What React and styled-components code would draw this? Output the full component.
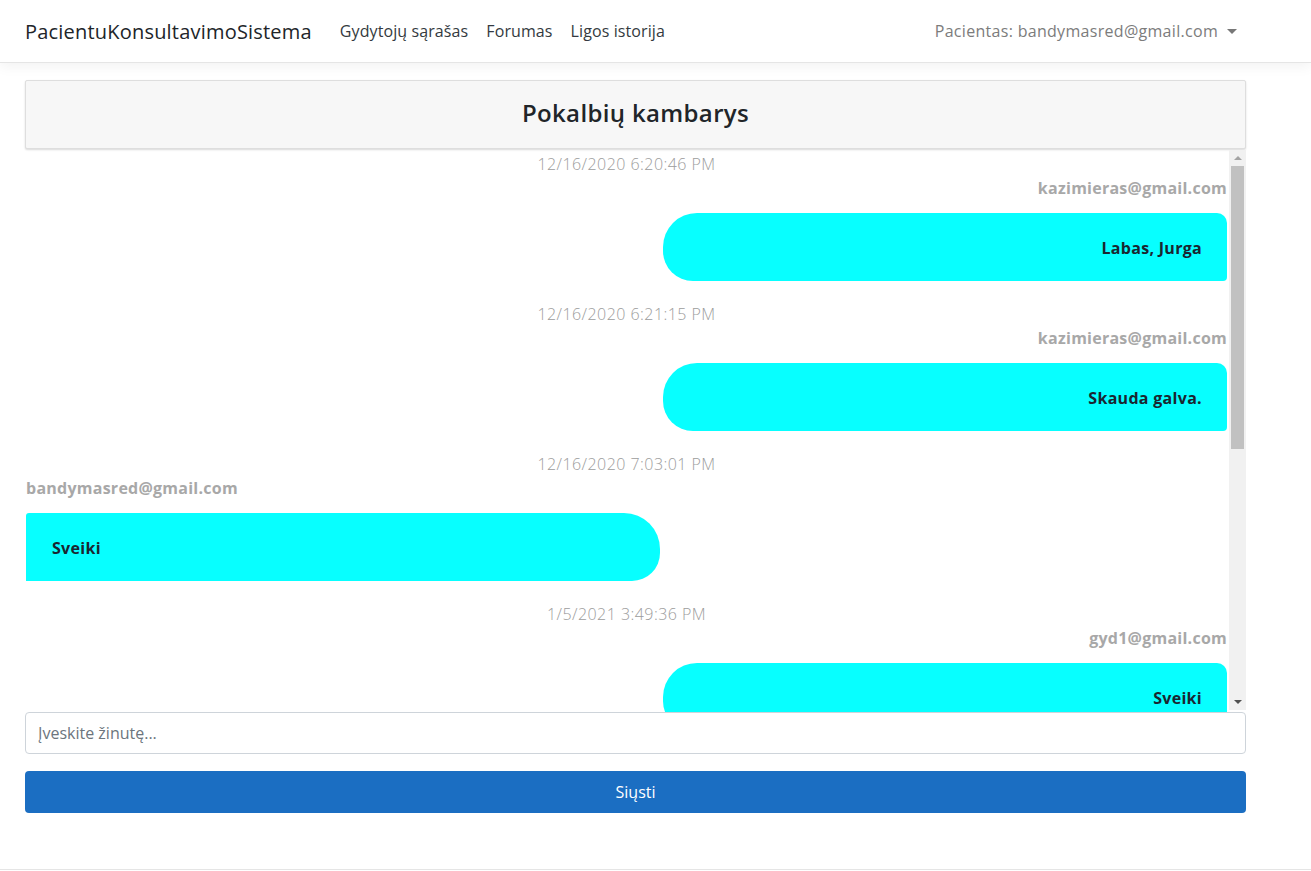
import React from "react";
import styled, { createGlobalStyle } from "styled-components";

const GlobalStyle = createGlobalStyle`
  html, body {
    margin: 0;
    padding: 0;
    height: 871px;
    overflow: hidden;
    background: #fff;
    font-family: "Open Sans", "Noto Sans", sans-serif;
    color: #212529;
  }
  * { box-sizing: border-box; }
`;

const Navbar = styled.nav`
  height: 63px;
  display: flex;
  align-items: center;
  padding: 0 65px 0 25px;
  background: #fff;
  border-bottom: 1px solid #e5e5e5;
  box-shadow: 0 4px 12px rgba(0, 0, 0, 0.05);
`;

const Brand = styled.a`
  font-size: 20px;
  letter-spacing: 0.2px;
  color: #212529;
  margin-right: 28px;
  text-decoration: none;
`;

const NavLinks = styled.div`
  display: flex;
  gap: 18px;
  flex: 1;
`;

const NavLink = styled.a`
  font-size: 16px;
  letter-spacing: 0.1px;
  color: #343a40;
  text-decoration: none;
`;

const UserMenu = styled.div`
  display: flex;
  align-items: center;
  font-size: 16px;
  letter-spacing: 0.3px;
  color: #7c7c7c;
  margin-right: 9px;
`;

const Caret = styled.span`
  display: inline-block;
  margin-left: 9px;
  border-top: 5px solid #777;
  border-left: 5px solid transparent;
  border-right: 5px solid transparent;
`;

const Main = styled.main`
  width: 1221px;
  margin: 17px 0 0 25px;
  display: flex;
  flex-direction: column;
`;

const HeaderCard = styled.div`
  height: 69px;
  padding-bottom: 5px;
  background: #f7f7f7;
  border: 1px solid #dedede;
  border-radius: 2px;
  box-shadow: 0 1px 2px rgba(0, 0, 0, 0.15);
  display: flex;
  align-items: center;
  justify-content: center;
`;

const Title = styled.h1`
  margin: 0;
  font-size: 24px;
  font-weight: 600;
  letter-spacing: 0.35px;
  color: #212529;
`;

const ChatArea = styled.div`
  height: 563px;
  display: flex;
  overflow: hidden;
`;

const Messages = styled.div`
  flex: 1;
  overflow: hidden;
  padding: 3px 2px 0 1px;
`;

const ScrollBar = styled.div`
  width: 17px;
  margin-top: 1px;
  margin-bottom: 2px;
  background: #f1f1f1;
  display: flex;
  flex-direction: column;
  align-items: center;
`;

const ScrollArrow = styled.div`
  height: 16px;
  width: 100%;
  display: flex;
  align-items: center;
  justify-content: center;

  &::after {
    content: "";
    border-left: 4px solid transparent;
    border-right: 4px solid transparent;
    ${(p) =>
      p.$down
        ? "border-top: 4px solid #505050;"
        : "border-bottom: 4px solid #a3a3a3;"}
  }
`;

const ScrollTrack = styled.div`
  flex: 1;
  width: 100%;
  padding: 0 2px;
`;

const ScrollThumb = styled.div`
  height: 283px;
  background: #c1c1c1;
`;

const Block = styled.div`
  display: flex;
  flex-direction: column;
  align-items: ${(p) => (p.$mine ? "flex-start" : "flex-end")};
  padding-bottom: 21px;
`;

const Time = styled.div`
  align-self: center;
  font-size: 16px;
  font-weight: 300;
  letter-spacing: 0.45px;
  line-height: 24px;
  color: #9c9c9c;
`;

const Sender = styled.div`
  font-size: 16px;
  font-weight: 700;
  letter-spacing: 0.25px;
  line-height: 24px;
  color: #a8a8a8;
`;

const Bubble = styled.div`
  margin-top: 13px;
  height: 68px;
  flex-shrink: 0;
  width: ${(p) => (p.$mine ? "634px" : "564px")};
  background: #07ffff;
  border-radius: ${(p) => (p.$mine ? "3px 36px 28px 0" : "34px 10px 4px 30px")};
  display: flex;
  align-items: center;
  justify-content: ${(p) => (p.$mine ? "flex-start" : "flex-end")};
  padding: ${(p) => (p.$mine ? "2px 0 0 26px" : "2px 25px 0 0")};
  font-size: 16px;
  font-weight: 700;
  letter-spacing: 0.3px;
  color: #1a2630;
`;

const Input = styled.input`
  height: 42px;
  border: 1px solid #ced4da;
  border-radius: 4px;
  padding: 0 12px;
  font-family: inherit;
  font-size: 16px;
  color: #495057;
  outline: none;

  &::placeholder {
    color: #6c757d;
  }
`;

const SendButton = styled.button`
  margin-top: 17px;
  height: 42px;
  border: none;
  border-radius: 4px;
  background: #1b6ec2;
  color: #fff;
  font-family: inherit;
  font-size: 16px;
`;

const Footer = styled.footer`
  margin-top: 56px;
  border-top: 1px solid #e5e5e5;
  height: 2px;
`;

const messages = [
  { time: "12/16/2020 6:20:46 PM", sender: "kazimieras@gmail.com", text: "Labas, Jurga", mine: false },
  { time: "12/16/2020 6:21:15 PM", sender: "kazimieras@gmail.com", text: "Skauda galva.", mine: false },
  { time: "12/16/2020 7:03:01 PM", sender: "bandymasred@gmail.com", text: "Sveiki", mine: true },
  { time: "1/5/2021 3:49:36 PM", sender: "gyd1@gmail.com", text: "Sveiki", mine: false },
];

const App = () => {
  return (
    <>
      <GlobalStyle />
      <Navbar>
        <Brand href="#">PacientuKonsultavimoSistema</Brand>
        <NavLinks>
          <NavLink href="#">Gydytojų sąrašas</NavLink>
          <NavLink href="#">Forumas</NavLink>
          <NavLink href="#">Ligos istorija</NavLink>
        </NavLinks>
        <UserMenu>
          Pacientas: bandymasred@gmail.com
          <Caret />
        </UserMenu>
      </Navbar>

      <Main>
        <HeaderCard>
          <Title>Pokalbių kambarys</Title>
        </HeaderCard>

        <ChatArea>
          <Messages>
            {messages.map((m, i) => (
              <Block key={i} $mine={m.mine}>
                <Time>{m.time}</Time>
                <Sender>{m.sender}</Sender>
                <Bubble $mine={m.mine}>{m.text}</Bubble>
              </Block>
            ))}
          </Messages>
          <ScrollBar>
            <ScrollArrow />
            <ScrollTrack>
              <ScrollThumb />
            </ScrollTrack>
            <ScrollArrow $down />
          </ScrollBar>
        </ChatArea>

        <Input placeholder="Įveskite žinutę..." />
        <SendButton>Siųsti</SendButton>
      </Main>
      <Footer />
    </>
  );
};

export default App;
